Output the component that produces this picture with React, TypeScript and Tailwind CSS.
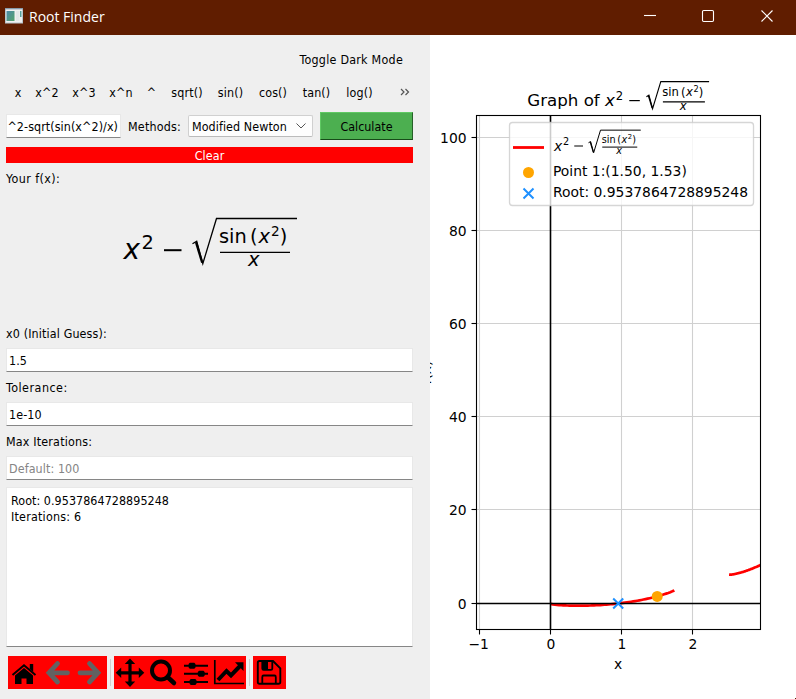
import React from "react";

const FUNCTIONS: [string, string][] = [
  ["x", "w-[22px]"],
  ["x^2", "w-[36px]"],
  ["x^3", "w-[38px]"],
  ["x^n", "w-[36px]"],
  ["^", "w-[25px]"],
  ["sqrt()", "w-[46px]"],
  ["sin()", "w-[41px]"],
  ["cos()", "w-[44px]"],
  ["tan()", "w-[43px]"],
  ["log()", "w-[43px]"],
];

const SX = 71;
const SY = 4.66;
const px = (x: number) => 120.5 + x * SX;
const py = (y: number) => 568.5 - y * SY;
const f = (x: number) => x * x - Math.sqrt(Math.max(0, Math.sin(x * x) / x));

function curve(from: number, to: number) {
  const points: string[] = [];
  for (let i = 0; i <= 60; i++) {
    const x = from + ((to - from) * i) / 60;
    points.push(`${px(x).toFixed(2)},${py(f(x)).toFixed(2)}`);
  }
  return points.join(" ");
}

// The formula, with its origin at the left end of the baseline, at 27.8px type.
function Formula({ x, y, scale, line = 1 }: { x: number; y: number; scale: number; line?: number }) {
  return (
    <g transform={`translate(${x} ${y}) scale(${scale})`} fill="black" fontFamily="DejaVu Sans, sans-serif">
      <text x="0" y="0" fontSize="27.8" fontStyle="oblique">x</text>
      <text x="18" y="-10.6" fontSize="19.4">2</text>
      <rect x="40.5" y="-10" width="17.5" height="2" />
      <path d="M69 -15.5 L73.2 -18 L79.3 4.5 L93 -40.7 L173.5 -40.7" fill="none" stroke="black" strokeWidth={line / scale} />
      <path d="M72.5 -17 L78.7 3.5" fill="none" stroke="black" strokeWidth="2.3" />
      <text x="95.5" y="-16" fontSize="19.4">sin</text>
      <text x="126.5" y="-16" fontSize="19.4">(</text>
      <text x="135" y="-16" fontSize="19.4" fontStyle="oblique">x</text>
      <text x="147.5" y="-23.5" fontSize="13.6">2</text>
      <text x="156.3" y="-16" fontSize="19.4">)</text>
      <path d="M96.5 -6.8 H166.5" stroke="black" strokeWidth={line / scale} />
      <text x="124.5" y="7" fontSize="19.4" fontStyle="oblique">x</text>
    </g>
  );
}

function Graph() {
  return (
    <svg width="366" height="664" viewBox="0 0 366 664" className="block [font-stretch:normal]" fontFamily="DejaVu Sans, sans-serif" fontSize="13.89">
      <text transform="translate(1.3 349.5) rotate(-90)">f(x)</text>
      <g stroke="#d0d0d0" strokeWidth="1.1">
        {[-1, 1, 2].map((v) => <path key={v} d={`M${px(v)} 80.5 V594.5`} />)}
        {[20, 40, 60, 80, 100].map((v) => <path key={v} d={`M46.5 ${Math.round(py(v)) - 0.5} H330.5`} />)}
      </g>
      <g fill="none" stroke="red" strokeWidth="2.7" strokeLinecap="butt">
        <polyline points={curve(0.005, 1.745)} />
        <polyline points={curve(2.515, 2.957)} />
      </g>
      <path d="M46.5 568.5 H330.5 M120.5 80.5 V594.5" stroke="black" strokeWidth="1.6" />
      <rect x="46.5" y="80.5" width="284" height="514" fill="none" stroke="black" strokeWidth="1.1" />
      <g stroke="black" strokeWidth="1.1">
        {[-1, 0, 1, 2].map((v) => <path key={v} d={`M${px(v)} 594.5 v5`} />)}
        {[0, 20, 40, 60, 80, 100].map((v) => <path key={v} d={`M46.5 ${v === 0 ? 568.5 : Math.round(py(v)) - 0.5} h-5`} />)}
      </g>
      <circle cx="227.2" cy="561.4" r="5.5" fill="orange" />
      <path d="M183.2 563.5 l10 10 m0 -10 l-10 10" stroke="dodgerblue" strokeWidth="2" />
      <g textAnchor="middle">
        {[-1, 0, 1, 2].map((v) => (
          <text key={v} x={v === -1 ? 48.7 : px(v) + 0.4} y="614">{v === -1 ? "−1" : v}</text>
        ))}
        <text x="188" y="634">x</text>
      </g>
      <g textAnchor="end">
        {[0, 20, 40, 60, 80, 100].map((v) => (
          <text key={v} x="36.6" y={Math.round(py(v)) + 5}>{v}</text>
        ))}
      </g>
      <text x="97.3" y="71" fontSize="16.67">Graph of</text>
      <Formula x={175} y={71} scale={0.6} line={1.1} />
      <rect x="79.5" y="87.5" width="244" height="83" rx="3" fill="white" fillOpacity="0.8" stroke="#ccc" strokeOpacity="0.8" strokeWidth="1.3" />
      <path d="M83 112.5 H114" stroke="red" strokeWidth="2.8" />
      <Formula x={124} y={115.500} scale={0.5} line={1} />
      <circle cx="98.5" cy="137.5" r="5.5" fill="orange" />
      <path d="M93.5 153.5 l10 10 m0 -10 l-10 10" stroke="dodgerblue" strokeWidth="2" />
      <text x="123" y="141">Point 1:(1.50, 1.53)</text>
      <text x="123" y="162">Root: 0.9537864728895248</text>
      <rect x="365" y="663" width="1" height="1" fill="#601d00" />
    </svg>
  );
}

function Tool({ left, width = 33, children }: { left: number; width?: number; children: React.ReactNode }) {
  return (
    <svg width={width} height="33" viewBox={`${left} 656 ${width} 33`} className="block shrink-0 bg-[#ff0000]">
      {children}
    </svg>
  );
}

function Field({ value, muted = false }: { value: string; muted?: boolean }) {
  return (
    <div className={`flex h-[24px] w-[407px] items-center border border-[#e8e8e8] border-b-[#868686] bg-white pt-[2px] pl-[2px] tracking-[0.1px] ${muted ? "text-[#858585]" : ""}`}>
      {value}
    </div>
  );
}

export default function App() {
  return (
    <div className="flex h-[699px] w-[796px] flex-col overflow-hidden bg-white font-['DejaVu_Sans_Condensed','DejaVu_Sans',sans-serif] text-[12.4px] leading-[16px] text-black [font-stretch:condensed]">
      <header className="flex h-[35px] shrink-0 items-center bg-[#601d00] pl-[5px] text-white [font-stretch:normal]">
        <svg width="18" height="16" viewBox="0 0 18 16" className="-mt-[3px]">
          <defs>
            <linearGradient id="pane" x1="0" y1="0" x2="1" y2="1">
              <stop stopColor="#4e8aa8" />
              <stop offset="1" stopColor="#55a36c" />
            </linearGradient>
          </defs>
          <rect x=".5" y=".5" width="17" height="14.5" fill="#f0f0f0" stroke="#b9c5cc" />
          <path d="M0 .8 H18" stroke="#71889a" />
          <rect x="1.5" y="3" width="8" height="10" fill="url(#pane)" />
          <rect x="11" y="3" width="3.5" height="10" fill="#e4e7e8" />
          <rect x="15" y="3" width="1.5" height="6" fill="#55a09a" />
        </svg>
        <h1 className="ml-[6px] -mt-[1px] font-['Open_Sans',sans-serif] text-[14px] leading-[20px]">Root Finder</h1>
        <svg width="130" height="14" viewBox="0 0 130 14" className="-mt-[3px] mr-[22px] ml-auto" fill="none" stroke="white" strokeWidth="1.1">
          <path d="M0 6.5 H12" />
          <rect x="58.5" y="1.5" width="11" height="11" rx="1.2" />
          <path d="M117.5 1.5 l11 11 m0 -11 l-11 11" />
        </svg>
      </header>

      <main className="flex min-h-0 flex-1">
        <section className="flex w-[430px] shrink-0 flex-col bg-[#efefef] pl-[6px]">
          <div className="flex h-[33px] items-end justify-end pr-[27px]">
            <span className="tracking-[0.25px]">Toggle Dark Mode</span>
          </div>
          <nav className="mt-[17px] flex h-[16px] pl-[1px]">
            {FUNCTIONS.map(([label, width]) => (
              <span key={label} className={`shrink-0 text-center tracking-[0.15px] whitespace-nowrap ${width}`}>{label}</span>
            ))}
            <svg width="10" height="8" viewBox="0 0 10 8" className="mt-[3px] ml-[19px]" fill="none" stroke="#555" strokeWidth="1.2">
              <path d="M1 1 l3 3 -3 3 M5.5 1 l3 3 -3 3" />
            </svg>
          </nav>
          <div className="mt-[11px] flex h-[28px] items-center">
            <div className="flex h-[24px] w-[115px] items-center justify-end overflow-hidden border border-[#e8e8e8] border-b-[#868686] bg-white pt-[1px] pr-[2px] tracking-[0.08px] whitespace-nowrap">^2-sqrt(sin(x^2)/x)</div>
            <span className="ml-[7px] w-[60px] pt-[2px] tracking-[0.2px] whitespace-nowrap">Methods:</span>
            <div className="flex h-[22px] w-[125px] items-center justify-between rounded-[2px] border border-[#d0d0d0] border-b-[#bbb] bg-[#fdfdfd] pr-[6px] pl-[3px] whitespace-nowrap">
              <span className="pt-[2px] tracking-[0.08px]">Modified Newton</span>
              <svg width="10" height="6" viewBox="0 0 10 6" className="shrink-0" fill="none" stroke="#555" strokeWidth="1">
                <path d="M.5 .5 L5 5 L9.500 .5" />
              </svg>
            </div>
            <button className="ml-[7px] flex h-[28px] w-[93px] items-center justify-center border border-t-[#5fc963] border-r-[#276029] border-b-[#174b19] border-l-[#5fc963] bg-[#4caf50] pt-[2px]">Calculate</button>
          </div>
          <button className="mt-[7px] h-[16px] w-[407px] bg-[#ff0000] pt-px text-white tracking-[0.1px]">Clear</button>
          <div className="mt-[8px] h-[16px] tracking-[0.4px]">Your f(x):</div>
          <svg width="407" height="139" viewBox="6 187 407 139" className="block shrink-0 [font-stretch:normal]">
            <Formula x={123.500} y={259.2} scale={1} line={1.3} />
          </svg>
          <label className="h-[16px] tracking-[0.14px]">x0 (Initial Guess):</label>
          <div className="mt-[6px]"><Field value="1.5" /></div>
          <label className="mt-[8px] h-[16px] tracking-[0.5px]">Tolerance:</label>
          <div className="mt-[6px]"><Field value="1e-10" /></div>
          <label className="mt-[8px] h-[16px] tracking-[0.18px]">Max Iterations:</label>
          <div className="mt-[6px]"><Field value="Default: 100" muted /></div>
          <div className="mt-[7px] h-[160px] w-[407px] shrink-0 border border-[#e8e8e8] border-b-[#868686] bg-white pt-[5px] pl-[4px]">
            <p className="tracking-[0.06px]">Root: 0.9537864728895248</p>
            <p className="tracking-[0.22px]">Iterations: 6</p>
          </div>
          <div className="mt-[9px] flex h-[33px] items-center pl-[2px]">
            <Tool left={8}>
              <path d="M15 675.500 L24 668 L33 675.500 V684 H26.500 V678.500 H21.500 V684 H15Z M29.800 664 H33.200 V672 L29.800 669Z" />
              <path d="M12.500 675 L24 665.300 L35.500 675" fill="none" stroke="black" strokeWidth="2" />
            </Tool>
            <Tool left={41}>
              <path d="M57.500 663.500 L49 672.800 L57.500 682 M50 672.800 H67.500" fill="none" stroke="#626262" strokeWidth="4.800" strokeLinecap="round" />
            </Tool>
            <Tool left={74}>
              <path d="M89.500 663.500 L98 672.800 L89.500 682 M97.500 672.800 H80" fill="none" stroke="#626262" strokeWidth="4.800" strokeLinecap="round" />
            </Tool>
            <span className="mx-[3px] h-[27px] w-px bg-[#cfcfcf]" />
            <Tool left={114}>
              <path d="M130 662 V684 M119 672.800 H141" stroke="black" strokeWidth="3.2" />
              <path d="M130 658.500 L135.200 664 H124.800Z M130 687 L135.200 681.500 H124.800Z M115.700 672.800 L121.200 667.600 V678Z M144.300 672.800 L138.800 667.600 V678Z" />
            </Tool>
            <Tool left={147}>
              <circle cx="161" cy="670.500" r="9" fill="none" stroke="black" strokeWidth="4" />
              <path d="M167.500 677 L174 683" stroke="black" strokeWidth="4.500" strokeLinecap="round" />
            </Tool>
            <Tool left={180}>
              <path d="M184 665.700 H208 M184 673.800 H208 M184 682 H208" stroke="black" strokeWidth="1.900" />
              <path d="M189.800 662.700 h4.500 l1.200 1.200 v3.600 l-1.200 1.200 h-4.500 l-1.200 -1.200 v-3.600Z M199 670.800 h4.500 l1.200 1.200 v3.600 l-1.200 1.200 h-4.500 l-1.200 -1.200 v-3.600Z M190.800 679 h4.500 l1.200 1.200 v3.600 l-1.200 1.200 h-4.500 l-1.200 -1.200 v-3.600Z" />
            </Tool>
            <Tool left={213}>
              <path d="M214.800 660 V683.500 H244" fill="none" stroke="black" strokeWidth="1.700" />
              <path d="M218 680 L226.500 671 L231 675.500 L240 666" fill="none" stroke="black" strokeWidth="4" />
              <path d="M235 662.300 H243.500 V671Z" />
            </Tool>
            <span className="mx-[3px] h-[27px] w-px bg-[#cfcfcf]" />
            <Tool left={253}>
              <path d="M259.500 661 H273 L280.300 668.300 V682 Q280.300 683.800 278.500 683.800 H259.500 Q257.800 683.800 257.800 682 V662.800 Q257.800 661 259.500 661Z" fill="none" stroke="black" strokeWidth="1.900" />
              <path d="M262.300 661 V668.500 Q262.300 669.800 263.600 669.800 H271 Q272.300 669.800 272.300 668.500 V661 M262.300 684 V677 Q262.300 675.500 263.600 675.500 H274.500 Q275.800 675.500 275.800 677 V684" fill="none" stroke="black" strokeWidth="1.800" />
              <rect x="262" y="661" width="6" height="9" />
            </Tool>
          </div>
        </section>
        <section className="flex-1 bg-white"><Graph /></section>
      </main>
    </div>
  );
}
